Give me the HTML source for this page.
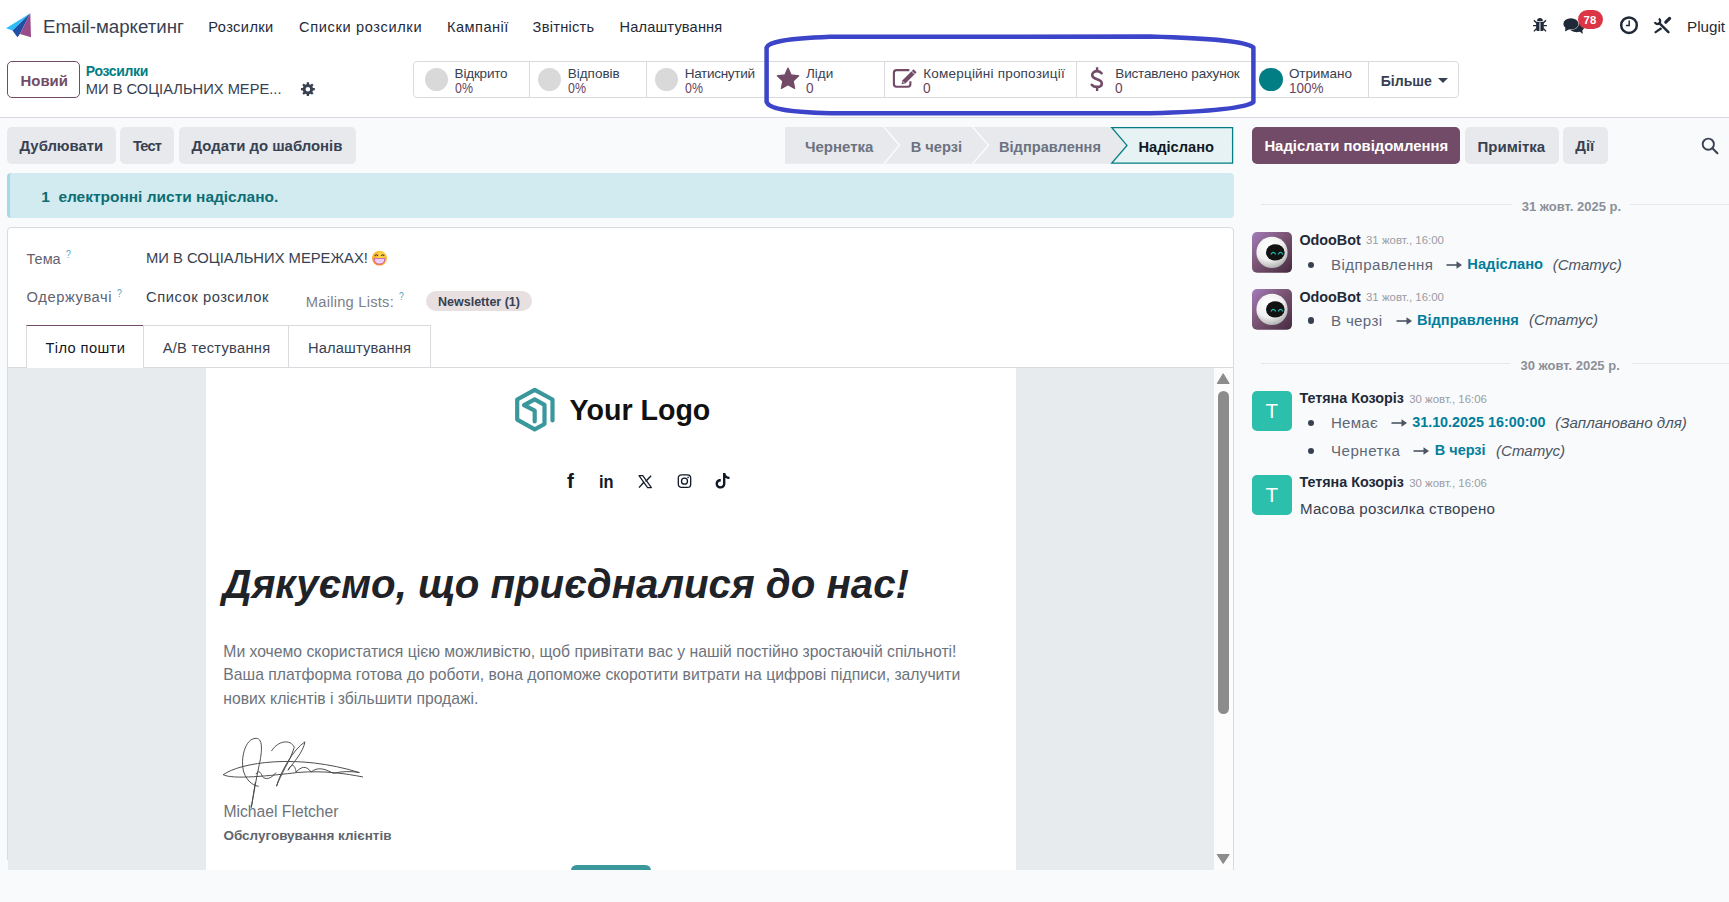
<!DOCTYPE html>
<html><head><meta charset="utf-8"><title>Email-маркетинг</title>
<style>
html,body{margin:0;padding:0;width:1729px;height:902px;overflow:hidden;background:#f9fafb;}
body{position:relative;font-family:"Liberation Sans",sans-serif;}
.a{position:absolute;}
.t{position:absolute;white-space:nowrap;}
</style></head><body>
<div class="a" style="left:0px;top:0px;width:1729px;height:117px;background:#fff"></div>
<div class="a" style="left:0px;top:117px;width:1729px;height:1px;background:#d8dadd"></div>
<div class="a" style="left:0px;top:118px;width:1729px;height:784px;background:#f9fafb"></div>
<svg class="a" style="left:6px;top:13px" width="26" height="25" viewBox="0 0 26 25">
<polygon points="0,15.3 24.3,0.3 6.5,17.6" fill="#2ebcfa"/>
<polygon points="6.5,17.6 24.3,0.3 13.9,21.1 11.4,24.2" fill="#1f4ea6"/>
<polygon points="24.3,0.3 25,24.2 13.9,21.1" fill="#984c8a"/>
</svg>
<div class="t " style="left:43.0px;top:18.07px;font-size:18.7px;line-height:18.7px;font-weight:400;color:#374151;">Email-маркетинг</div>
<div class="t " style="left:208.3px;top:19.74px;font-size:14.6px;line-height:14.6px;font-weight:400;color:#1f2937;letter-spacing:0.414px;">Розсилки</div>
<div class="t " style="left:299.0px;top:19.74px;font-size:14.6px;line-height:14.6px;font-weight:400;color:#1f2937;letter-spacing:0.641px;">Списки розсилки</div>
<div class="t " style="left:447.0px;top:19.74px;font-size:14.6px;line-height:14.6px;font-weight:400;color:#1f2937;letter-spacing:0.478px;">Кампанії</div>
<div class="t " style="left:532.6px;top:19.74px;font-size:14.6px;line-height:14.6px;font-weight:400;color:#1f2937;letter-spacing:0.262px;">Звітність</div>
<div class="t " style="left:619.5px;top:19.74px;font-size:14.6px;line-height:14.6px;font-weight:400;color:#1f2937;letter-spacing:0.172px;">Налаштування</div>
<div class="t " style="left:1687.0px;top:18.93px;font-size:15.2px;line-height:15.2px;font-weight:400;color:#1f2937;">Plugit</div>
<div class="a" style="left:7px;top:61px;width:73px;height:37px;border:1px solid #714b67;border-radius:5px;box-sizing:border-box;background:#fff"></div>
<div class="t " style="left:20.5px;top:74.14px;font-size:14.95px;line-height:14.95px;font-weight:700;color:#714b67;">Новий</div>
<div class="t " style="left:85.8px;top:63.95px;font-size:14.0px;line-height:14.0px;font-weight:700;color:#017e84;letter-spacing:-0.338px;">Розсилки</div>
<div class="t " style="left:85.8px;top:81.96px;font-size:14.7px;line-height:14.7px;font-weight:400;color:#374151;">МИ В СОЦІАЛЬНИХ МЕРЕ...</div>
<div class="a" style="left:412.5px;top:61px;width:1046.0px;height:36.5px;border:1px solid #d8dadd;border-radius:4px;box-sizing:border-box;background:#fff"></div>
<div class="a" style="left:529px;top:62px;width:1px;height:35px;background:#d8dadd"></div>
<div class="a" style="left:646px;top:62px;width:1px;height:35px;background:#d8dadd"></div>
<div class="a" style="left:766px;top:62px;width:1px;height:35px;background:#d8dadd"></div>
<div class="a" style="left:884px;top:62px;width:1px;height:35px;background:#d8dadd"></div>
<div class="a" style="left:1076px;top:62px;width:1px;height:35px;background:#d8dadd"></div>
<div class="a" style="left:1253px;top:62px;width:1px;height:35px;background:#d8dadd"></div>
<div class="a" style="left:1368px;top:62px;width:1px;height:35px;background:#d8dadd"></div>
<div class="a" style="left:424.5px;top:67.8px;width:23px;height:23px;border-radius:50%;background:#d9d9d9"></div>
<div class="a" style="left:537.9px;top:67.8px;width:23px;height:23px;border-radius:50%;background:#d9d9d9"></div>
<div class="a" style="left:655.0px;top:67.8px;width:23px;height:23px;border-radius:50%;background:#d9d9d9"></div>
<div class="a" style="left:1259.3px;top:67.8px;width:23.5px;height:23.5px;border-radius:50%;background:#017e84"></div>
<div class="t " style="left:454.6px;top:66.77px;font-size:13.5px;line-height:13.5px;font-weight:400;color:#374151;letter-spacing:-0.197px;">Відкрито</div>
<div class="t " style="left:454.6px;top:80.85px;font-size:14px;line-height:14px;font-weight:400;color:#6a4561;transform:scaleX(0.8846);transform-origin:0 0;">0%</div>
<div class="t " style="left:567.7px;top:66.77px;font-size:13.5px;line-height:13.5px;font-weight:400;color:#374151;">Відповів</div>
<div class="t " style="left:567.7px;top:80.85px;font-size:14px;line-height:14px;font-weight:400;color:#6a4561;transform:scaleX(0.8846);transform-origin:0 0;">0%</div>
<div class="t " style="left:684.7px;top:66.77px;font-size:13.5px;line-height:13.5px;font-weight:400;color:#374151;letter-spacing:-0.290px;">Натиснутий</div>
<div class="t " style="left:684.7px;top:80.85px;font-size:14px;line-height:14px;font-weight:400;color:#6a4561;transform:scaleX(0.8846);transform-origin:0 0;">0%</div>
<div class="t " style="left:805.9px;top:66.77px;font-size:13.5px;line-height:13.5px;font-weight:400;color:#374151;">Ліди</div>
<div class="t " style="left:805.9px;top:80.85px;font-size:14px;line-height:14px;font-weight:400;color:#6a4561;transform:scaleX(0.9761);transform-origin:0 0;">0</div>
<div class="t " style="left:923.3px;top:66.77px;font-size:13.5px;line-height:13.5px;font-weight:400;color:#374151;letter-spacing:0.202px;">Комерційні пропозиції</div>
<div class="t " style="left:923.3px;top:80.85px;font-size:14px;line-height:14px;font-weight:400;color:#6a4561;transform:scaleX(0.9761);transform-origin:0 0;">0</div>
<div class="t " style="left:1115.3px;top:66.77px;font-size:13.5px;line-height:13.5px;font-weight:400;color:#374151;letter-spacing:-0.164px;">Виставлено рахунок</div>
<div class="t " style="left:1115.3px;top:80.85px;font-size:14px;line-height:14px;font-weight:400;color:#6a4561;transform:scaleX(0.9761);transform-origin:0 0;">0</div>
<div class="t " style="left:1288.9px;top:66.77px;font-size:13.5px;line-height:13.5px;font-weight:400;color:#374151;letter-spacing:-0.070px;">Отримано</div>
<div class="t " style="left:1288.9px;top:80.85px;font-size:14px;line-height:14px;font-weight:400;color:#6a4561;transform:scaleX(0.9635);transform-origin:0 0;">100%</div>
<div class="t " style="left:1380.7px;top:73.98px;font-size:14.08px;line-height:14.08px;font-weight:700;color:#374151;">Більше</div>
<svg class="a" style="left:1437.5px;top:77.5px" width="10" height="5" viewBox="0 0 10 5"><polygon points="0,0 10,0 5,5" fill="#374151"/></svg>
<svg class="a" style="left:0;top:0" width="1729" height="120"><polygon points="788.00,68.00 791.17,74.93 798.75,75.81 793.14,80.97 794.64,88.44 788.00,84.70 781.36,88.44 782.86,80.97 777.25,75.81 784.83,74.93" fill="#714b67" stroke="#714b67" stroke-width="1.2" stroke-linejoin="round"/></svg>
<svg class="a" style="left:892px;top:68px" width="26" height="21" viewBox="0 0 26 21">
<path d="M17.3 2.1 H4.6 Q1.9 2.1 1.9 4.8 V16.1 Q1.9 18.8 4.6 18.8 H15.7 Q18.4 18.8 18.4 16.1 V13.2" fill="none" stroke="#714b67" stroke-width="2.1"/>
<path d="M21.5 1.2 L24.6 4.3 L13.6 15.3 L9.6 16.2 L10.5 12.2 Z" fill="#714b67"/>
<path d="M10.9 13.6 L12.2 14.9" stroke="#fff" stroke-width="1"/>
<path d="M19.6 3.1 L22.7 6.2" stroke="#fff" stroke-width="0.9"/>
</svg>
<svg class="a" style="left:1082px;top:62px" width="30" height="34" viewBox="0 0 30 34">
<path d="M15.1 5.2 V9 M15.1 24.8 V29.1" stroke="#714b67" stroke-width="2.4"/>
<path d="M19.6 11.2 C18.5 9.7 16.8 9.1 15.1 9.1 C12.3 9.1 10.2 10.7 10.2 13 C10.2 15.6 12.6 16.4 15.1 17.2 C17.6 18 19.8 18.9 19.8 21.4 C19.8 23.6 17.7 24.9 15.1 24.9 C12.8 24.9 10.9 24.1 9.8 22.8" fill="none" stroke="#714b67" stroke-width="2.6" stroke-linecap="round"/>
</svg>
<svg class="a" style="left:0;top:0" width="400" height="120"><path d="M312.95 87.95 L314.81 88.10 L314.81 90.30 L312.95 90.45 L312.35 91.88 L313.56 93.31 L312.01 94.86 L310.58 93.65 L309.15 94.25 L309.00 96.11 L306.80 96.11 L306.65 94.25 L305.22 93.65 L303.79 94.86 L302.24 93.31 L303.45 91.88 L302.85 90.45 L300.99 90.30 L300.99 88.10 L302.85 87.95 L303.45 86.52 L302.24 85.09 L303.79 83.54 L305.22 84.75 L306.65 84.15 L306.80 82.29 L309.00 82.29 L309.15 84.15 L310.58 84.75 L312.01 83.54 L313.56 85.09 L312.35 86.52 Z M310.2 89.2 A2.3 2.3 0 1 0 305.59999999999997 89.2 A2.3 2.3 0 1 0 310.2 89.2 Z" fill="#374151" fill-rule="evenodd"/></svg>
<svg class="a" style="left:0;top:0" width="1729" height="130"><path d="M766.6 102 L766.6 47.5 C769 41.5 785 39 830 36.8 L1150 36.6 C1215 38.5 1246 41.5 1253.4 47.5 L1253.4 102 C1246 108 1215 111.5 1150 113.3 L830 113.3 C785 112 769 108.5 766.6 102 Z" fill="none" stroke="#3c44c9" stroke-width="4.5" stroke-linejoin="round"/></svg>
<svg class="a" style="left:1530px;top:15px" width="20" height="20" viewBox="0 0 20 20">
<path d="M7.15 5.9 A2.8 2.8 0 0 1 12.75 5.9 Z" fill="#1f2937"/>
<path d="M6.1 6.8 H13.8 V14.6 Q13.8 16 12.4 16 H7.5 Q6.1 16 6.1 14.6 Z" fill="#1f2937"/>
<rect x="9.45" y="7.4" width="1" height="8.6" fill="#fff"/>
<path d="M3.9 5.2 L6.6 7.9 M16 5.2 L13.3 7.9 M3 10.6 H6.2 M16.9 10.6 H13.7 M6.4 13.6 L3.9 16.4 M13.5 13.6 L16 16.4" stroke="#1f2937" stroke-width="1.4"/>
</svg>
<svg class="a" style="left:1562px;top:15px" width="24" height="22" viewBox="0 0 24 22">
<ellipse cx="14.6" cy="12.6" rx="7.4" ry="4.6" fill="#1f2937"/>
<path d="M16.5 15.5 L20.8 19.1 L20.2 14.6 Z" fill="#1f2937"/>
<ellipse cx="8.9" cy="8.9" rx="7.9" ry="6.0" fill="#fff"/>
<ellipse cx="8.9" cy="8.9" rx="7.5" ry="5.7" fill="#1f2937"/>
<path d="M3.4 12.4 L3.1 16.5 L7.2 14.2 Z" fill="#1f2937"/>
</svg>
<div class="a" style="left:1578px;top:10px;width:24.5px;height:19.4px;border-radius:10px;background:#dc3545"></div>
<div class="t " style="left:1583.6px;top:14.73px;font-size:11.3px;line-height:11.3px;font-weight:700;color:#fff;">78</div>
<svg class="a" style="left:1619px;top:15px" width="20" height="20" viewBox="0 0 20 20">
<circle cx="10" cy="10.2" r="7.8" fill="none" stroke="#1f2937" stroke-width="2.5"/>
<path d="M10.2 5.6 V10.4 H6.9" fill="none" stroke="#1f2937" stroke-width="1.5"/>
</svg>
<svg class="a" style="left:1652px;top:16px" width="20" height="19" viewBox="0 0 20 19">
<path d="M7.6 7.4 L16.4 16.2" stroke="#1f2937" stroke-width="2.5" stroke-linecap="round"/>
<path d="M6.8 2.78 A2.8 2.8 0 1 1 2.77 6.16" fill="none" stroke="#1f2937" stroke-width="2.3"/>
<path d="M17.6 2.4 L13.8 6.2" stroke="#1f2937" stroke-width="3.2" stroke-linecap="round"/>
<path d="M8.6 11.3 L10.3 13 L3.4 17.4 L2.1 16.1 Z" fill="#1f2937"/>
</svg>
<div class="a" style="left:7px;top:127px;width:108.7px;height:36.69999999999999px;background:#e7e9ed;border-radius:5px"></div>
<div class="t " style="left:19.6px;top:139.22px;font-size:14.86px;line-height:14.86px;font-weight:700;color:#374151;">Дублювати</div>
<div class="a" style="left:120.2px;top:127px;width:53.60000000000001px;height:36.69999999999999px;background:#e7e9ed;border-radius:5px"></div>
<div class="t " style="left:132.9px;top:139.44px;font-size:14.6px;line-height:14.6px;font-weight:700;color:#374151;letter-spacing:-0.797px;">Тест</div>
<div class="a" style="left:179.1px;top:127px;width:177.4px;height:36.69999999999999px;background:#e7e9ed;border-radius:5px"></div>
<div class="t " style="left:191.5px;top:139.19px;font-size:14.9px;line-height:14.9px;font-weight:700;color:#374151;">Додати до шаблонів</div>
<svg class="a" style="left:0;top:0" width="1240" height="170">
<polygon points="785,127 1119,127 1134.5,145.3 1119,163.7 785,163.7" fill="#e7e9ed"/>
<polyline points="884,127 899.4,145.3 884,163.7" fill="none" stroke="#f9fafb" stroke-width="1.6"/>
<polyline points="972.6,127 988.5,145.3 972.6,163.7" fill="none" stroke="#f9fafb" stroke-width="1.6"/>
<polygon points="1111.8,127.6 1232.6,127.6 1232.6,163.2 1111.8,163.2 1127,145.4" fill="#e6f2f3" stroke="#017e84" stroke-width="1.3"/>
</svg>
<div class="t " style="left:805.0px;top:139.31px;font-size:14.99px;line-height:14.99px;font-weight:700;color:#6b7280;">Чернетка</div>
<div class="t " style="left:910.7px;top:139.62px;font-size:14.62px;line-height:14.62px;font-weight:700;color:#6b7280;">В черзі</div>
<div class="t " style="left:999.0px;top:139.62px;font-size:14.62px;line-height:14.62px;font-weight:700;color:#6b7280;">Відправлення</div>
<div class="t " style="left:1138.5px;top:139.60px;font-size:14.65px;line-height:14.65px;font-weight:700;color:#111827;">Надіслано</div>
<div class="a" style="left:7px;top:173px;width:1226.5px;height:44.599999999999994px;background:#d2ebf0;border-radius:4px;border-left:3px solid #a3d9e3;box-sizing:border-box"></div>
<div class="t " style="left:41.2px;top:188.50px;font-size:15.47px;line-height:15.47px;font-weight:700;color:#0c6e74;white-space:pre">1&nbsp; електронні листи надіслано.</div>
<div class="a" style="left:7px;top:227px;width:1227px;height:653px;background:#fff;border:1px solid #d8dadd;border-radius:4px;box-sizing:border-box"></div>
<div class="t " style="left:26.6px;top:251.68px;font-size:14.44px;line-height:14.44px;font-weight:400;color:#5f636f;">Тема</div>
<div class="t " style="left:66.2px;top:249.27px;font-size:11.5px;line-height:11.5px;font-weight:400;color:#4aa3b8;transform:scaleX(0.75);transform-origin:0 0;">?</div>
<div class="t " style="left:26.6px;top:289.66px;font-size:14.7px;line-height:14.7px;font-weight:400;color:#5f636f;letter-spacing:0.576px;">Одержувачі</div>
<div class="t " style="left:117.2px;top:287.67px;font-size:11.5px;line-height:11.5px;font-weight:400;color:#4aa3b8;transform:scaleX(0.75);transform-origin:0 0;">?</div>
<div class="t " style="left:146.0px;top:251.30px;font-size:14.77px;line-height:14.77px;font-weight:400;color:#374151;">МИ В СОЦІАЛЬНИХ МЕРЕЖАХ!</div>
<div class="t " style="left:146.0px;top:289.66px;font-size:14.7px;line-height:14.7px;font-weight:400;color:#374151;letter-spacing:0.567px;">Список розсилок</div>
<div class="t " style="left:305.8px;top:294.76px;font-size:14.7px;line-height:14.7px;font-weight:400;color:#7c7f89;letter-spacing:0.233px;">Mailing Lists:</div>
<div class="t " style="left:398.8px;top:291.47px;font-size:11.5px;line-height:11.5px;font-weight:400;color:#4aa3b8;transform:scaleX(0.75);transform-origin:0 0;">?</div>
<div class="a" style="left:426px;top:291px;width:105.79999999999995px;height:19.80000000000001px;background:#e8dfe1;border-radius:10px"></div>
<div class="t " style="left:438.0px;top:296.41px;font-size:12.51px;line-height:12.51px;font-weight:700;color:#374151;">Newsletter (1)</div>
<svg class="a" style="left:372px;top:251px" width="16" height="15" viewBox="0 0 16 15">
<defs><radialGradient id="eg" cx="0.6" cy="0.3" r="0.8"><stop offset="0" stop-color="#ffe04a"/><stop offset="0.7" stop-color="#f9a825"/><stop offset="1" stop-color="#f0813a"/></radialGradient></defs>
<circle cx="7.5" cy="7.2" r="7.4" fill="url(#eg)"/>
<path d="M3 5 Q4.5 2.4 6 5 M9.2 5 Q10.7 2.4 12.2 5" fill="none" stroke="#4a2d2d" stroke-width="1.1"/>
<path d="M2.2 7.6 H12.9 Q12.6 13 7.5 13 Q2.5 13 2.2 7.6 Z" fill="#f3dcf5" stroke="#b23fc0" stroke-width="0.7"/>
<path d="M3 10 H12" stroke="#e3b6ea" stroke-width="0.7"/>
</svg>
<div class="a" style="left:8px;top:367px;width:1225px;height:1px;background:#d8dadd"></div>
<div class="a" style="left:26px;top:324.5px;width:117.5px;height:43.5px;background:#fff;border:1px solid #d8dadd;border-bottom:none;border-top:1.5px solid #714b67;box-sizing:border-box"></div>
<div class="a" style="left:143px;top:324.5px;width:146px;height:42.5px;border:1px solid #d8dadd;border-bottom:none;border-left:none;box-sizing:border-box"></div>
<div class="a" style="left:288px;top:324.5px;width:143px;height:42.5px;border:1px solid #d8dadd;border-bottom:none;border-left:none;box-sizing:border-box"></div>
<div class="a" style="left:27px;top:366px;width:115.5px;height:2px;background:#fff"></div>
<div class="t " style="left:45.5px;top:341.06px;font-size:14.7px;line-height:14.7px;font-weight:400;color:#111827;letter-spacing:0.375px;">Тіло пошти</div>
<div class="t " style="left:162.7px;top:341.06px;font-size:14.7px;line-height:14.7px;font-weight:400;color:#374151;letter-spacing:0.259px;">A/B тестування</div>
<div class="t " style="left:308.0px;top:341.06px;font-size:14.7px;line-height:14.7px;font-weight:400;color:#374151;letter-spacing:0.127px;">Налаштування</div>
<div class="a" style="left:8px;top:368px;width:1206px;height:502px;background:#e7ebee"></div>
<div class="a" style="left:206px;top:368px;width:810px;height:502px;background:#fff"></div>
<div class="a" style="left:1214px;top:368px;width:19px;height:502px;background:#fcfcfc"></div>
<div class="a" style="left:1218.2px;top:391px;width:10.799999999999955px;height:322.5px;background:#8c8c8c;border-radius:6px"></div>
<svg class="a" style="left:1216px;top:372px" width="15" height="495" viewBox="0 0 15 495">
<polygon points="1.2,11.5 7.2,1.7 13.2,11.5" fill="#8c8c8c" stroke="#8c8c8c" stroke-width="1" stroke-linejoin="round"/>
<polygon points="1.2,482.5 13.2,482.5 7.2,491.5" fill="#8c8c8c" stroke="#8c8c8c" stroke-width="1" stroke-linejoin="round"/>
</svg>
<div class="a" style="left:0px;top:870px;width:1240px;height:32px;background:#f9fafb"></div>
<svg class="a" style="left:510px;top:383px" width="50" height="54" viewBox="0 0 50 54">
<polyline points="42.5,37.4 42.5,16.5 24.7,6.8 7.2,16.5 7.2,36.6 24.7,46.3 34.5,41 34.5,21.8 24.7,16.4 14,22.2 24.7,27.6 24.7,38.4" fill="none" stroke="#3a979b" stroke-width="4.2" stroke-linecap="round" stroke-linejoin="round"/>
</svg>
<div class="t " style="left:569.5px;top:396.29px;font-size:28.6px;line-height:28.6px;font-weight:700;color:#111111;">Your Logo</div>
<div class="t " style="left:567.0px;top:470.65px;font-size:20.5px;line-height:20.5px;font-weight:700;color:#111827;">f</div>
<div class="t " style="left:598.6px;top:473.39px;font-size:18.2px;line-height:18.2px;font-weight:700;color:#111827;transform:scaleX(0.9027);transform-origin:0 0;">in</div>
<svg class="a" style="left:636px;top:473px" width="18" height="17" viewBox="0 0 18 17">
<path d="M3 2.7 H6.8 L15.4 14.6 H11.6 Z" fill="none" stroke="#111827" stroke-width="1.2" stroke-linejoin="round"/>
<path d="M15.1 2.7 L9.6 8.5 M3 14.6 L8.1 9" stroke="#111827" stroke-width="1.4"/>
</svg>
<svg class="a" style="left:676px;top:473px" width="17" height="16" viewBox="0 0 17 16">
<rect x="2.3" y="1.8" width="12.4" height="12.6" rx="3.2" fill="none" stroke="#111827" stroke-width="1.3"/>
<circle cx="8.5" cy="8.2" r="3" fill="none" stroke="#111827" stroke-width="1.3"/>
<circle cx="12.1" cy="4.4" r="0.8" fill="#111827"/>
</svg>
<svg class="a" style="left:714px;top:471px" width="17" height="19" viewBox="0 0 17 19">
<path d="M9 2 H11.3 C11.6 4.2 13 5.6 15.5 5.7 V8.1 C13.9 8.1 12.5 7.6 11.4 6.8 V12.5 C11.4 15.4 9.4 17.6 6.4 17.6 C3.6 17.6 1.6 15.5 1.6 12.8 C1.6 10 3.8 7.9 6.8 8.1 V10.5 C5.2 10.2 3.9 11.2 3.9 12.8 C3.9 14.2 5 15.3 6.4 15.3 C7.9 15.3 9 14.2 9 12.5 Z" fill="#111827"/>
</svg>
<div class="t " style="left:222.6px;top:564.53px;font-size:40.25px;line-height:40.25px;font-weight:700;font-style:italic;color:#1f2328;">Дякуємо, що приєдналися до нас!</div>
<div class="t " style="left:223.3px;top:643.59px;font-size:15.72px;line-height:15.72px;font-weight:400;color:#6c737c;">Ми хочемо скористатися цією можливістю, щоб привітати вас у нашій постійно зростаючій спільноті!</div>
<div class="t " style="left:223.3px;top:666.59px;font-size:15.72px;line-height:15.72px;font-weight:400;color:#6c737c;">Ваша платформа готова до роботи, вона допоможе скоротити витрати на цифрові підписи, залучити</div>
<div class="t " style="left:223.3px;top:690.69px;font-size:15.72px;line-height:15.72px;font-weight:400;color:#6c737c;">нових клієнтів і збільшити продажі.</div>
<svg class="a" style="left:218px;top:733px" width="150" height="80" viewBox="0 0 1691 902">
<g fill="none" stroke="#4a4a4a" stroke-width="11" stroke-linecap="round">
<path d="M60 470 C 250 330, 900 230, 1590 445"/>
<path d="M60 470 C 150 530, 600 480, 900 445 C 1200 420, 1450 460, 1630 495"/>
<path d="M455 600 C 420 600, 330 560, 290 440 C 250 300, 300 60, 430 60 C 520 60, 490 250, 460 380 C 430 520, 400 700, 375 840 C 390 760, 405 650, 420 560"/>
<path d="M430 460 C 450 420, 480 430, 500 490 C 530 530, 600 520, 650 450"/>
<path d="M605 200 C 680 80, 820 70, 860 160 C 820 300, 700 480, 660 600 C 700 450, 850 180, 980 100 C 960 220, 850 330, 790 420 C 830 330, 870 360, 880 440 C 940 380, 990 360, 1050 440 C 1120 380, 1200 400, 1300 455 C 1400 430, 1500 430, 1590 445"/>
</g></svg>
<div class="t " style="left:223.5px;top:804.03px;font-size:15.68px;line-height:15.68px;font-weight:400;color:#6c737c;">Michael Fletcher</div>
<div class="t " style="left:223.5px;top:828.90px;font-size:13.47px;line-height:13.47px;font-weight:700;color:#5f656d;">Обслуговування клієнтів</div>
<div class="a" style="left:570.5px;top:865px;width:80.5px;height:11px;background:#3a979b;border-radius:6px"></div>
<div class="a" style="left:0px;top:870px;width:1240px;height:32px;background:#f9fafb"></div>
<div class="a" style="left:6px;top:860px;width:2px;height:10px;background:#f9fafb"></div>
<div class="a" style="left:1252px;top:127px;width:208px;height:36.69999999999999px;background:#714b67;border-radius:5px"></div>
<div class="t " style="left:1264.4px;top:139.21px;font-size:14.87px;line-height:14.87px;font-weight:700;color:#ffffff;">Надіслати повідомлення</div>
<div class="a" style="left:1465px;top:127px;width:93.70000000000005px;height:36.69999999999999px;background:#e7e9ed;border-radius:5px"></div>
<div class="t " style="left:1477.5px;top:139.10px;font-size:15.0px;line-height:15.0px;font-weight:700;color:#374151;">Примітка</div>
<div class="a" style="left:1563px;top:127px;width:44.799999999999955px;height:36.69999999999999px;background:#e7e9ed;border-radius:5px"></div>
<div class="t " style="left:1575.3px;top:139.15px;font-size:14.94px;line-height:14.94px;font-weight:700;color:#374151;">Дії</div>
<svg class="a" style="left:1700px;top:136px" width="20" height="20" viewBox="0 0 20 20">
<circle cx="8.3" cy="8.2" r="5.6" fill="none" stroke="#374151" stroke-width="1.9"/>
<path d="M12.4 12.3 L17.4 17.2" stroke="#374151" stroke-width="2.1" stroke-linecap="round"/>
</svg>
<div class="a" style="left:1261px;top:204px;width:250.70000000000005px;height:1px;background:#e5e7eb"></div>
<div class="a" style="left:1630px;top:204px;width:99px;height:1px;background:#e5e7eb"></div>
<div class="t " style="left:1521.8px;top:199.60px;font-size:13.0px;line-height:13.0px;font-weight:700;color:#8b9099;">31 жовт. 2025 р.</div>
<div class="a" style="left:1261px;top:363px;width:249px;height:1px;background:#e5e7eb"></div>
<div class="a" style="left:1631.7px;top:363px;width:97.29999999999995px;height:1px;background:#e5e7eb"></div>
<div class="t " style="left:1520.5px;top:358.60px;font-size:13.0px;line-height:13.0px;font-weight:700;color:#8b9099;">30 жовт. 2025 р.</div>
<svg class="a" style="left:1252px;top:232px" width="40" height="41" viewBox="0 0 40 41">
<defs><linearGradient id="bg232" x1="0" y1="0" x2="1" y2="1"><stop offset="0" stop-color="#a47cbd"/><stop offset="0.45" stop-color="#7a5574"/><stop offset="1" stop-color="#452a40"/></linearGradient>
<radialGradient id="sg232" cx="0.4" cy="0.3" r="0.75"><stop offset="0" stop-color="#ffffff"/><stop offset="0.6" stop-color="#f0f0f0"/><stop offset="1" stop-color="#a9a9a9"/></radialGradient></defs>
<rect x="0" y="0" width="40" height="40.8" rx="5" fill="url(#bg232)"/>
<circle cx="20" cy="20.4" r="15.6" fill="url(#sg232)"/>
<ellipse cx="23.3" cy="20.4" rx="9.3" ry="8.2" fill="#121212"/>
<path d="M19.2 22 Q21.3 18.6 23.4 22 M26.4 22 Q28.5 18.6 30.6 22" fill="none" stroke="#1dbcb0" stroke-width="1.3" stroke-linecap="round"/>
</svg>
<div class="t " style="left:1299.4px;top:232.74px;font-size:14.36px;line-height:14.36px;font-weight:700;color:#1f2937;">OdooBot</div>
<div class="t " style="left:1366.0px;top:234.70px;font-size:11.46px;line-height:11.46px;font-weight:400;color:#9a9ca5;">31 жовт., 16:00</div>
<div class="a" style="left:1308px;top:261.9px;width:6.2px;height:6.2px;border-radius:50%;background:#374151"></div>
<div class="t " style="left:1331.0px;top:257.42px;font-size:15.1px;line-height:15.1px;font-weight:400;color:#5f6877;letter-spacing:0.459px;">Відправлення</div>
<svg class="a" style="left:1446px;top:260px" width="17" height="10" viewBox="0 0 17 10"><path d="M0.5 5 H13" stroke="#4b5563" stroke-width="1.6"/><polygon points="10.5,1.3 16,5 10.5,8.7" fill="#4b5563"/></svg>
<div class="t " style="left:1467.3px;top:257.26px;font-size:14.69px;line-height:14.69px;font-weight:700;color:#017e9c;">Надіслано</div>
<div class="t " style="left:1552.7px;top:256.93px;font-size:15.08px;line-height:15.08px;font-weight:400;font-style:italic;color:#4b5563;">(Статус)</div>
<svg class="a" style="left:1252px;top:289px" width="40" height="41" viewBox="0 0 40 41">
<defs><linearGradient id="bg289" x1="0" y1="0" x2="1" y2="1"><stop offset="0" stop-color="#a47cbd"/><stop offset="0.45" stop-color="#7a5574"/><stop offset="1" stop-color="#452a40"/></linearGradient>
<radialGradient id="sg289" cx="0.4" cy="0.3" r="0.75"><stop offset="0" stop-color="#ffffff"/><stop offset="0.6" stop-color="#f0f0f0"/><stop offset="1" stop-color="#a9a9a9"/></radialGradient></defs>
<rect x="0" y="0" width="40" height="40.8" rx="5" fill="url(#bg289)"/>
<circle cx="20" cy="20.4" r="15.6" fill="url(#sg289)"/>
<ellipse cx="23.3" cy="20.4" rx="9.3" ry="8.2" fill="#121212"/>
<path d="M19.2 22 Q21.3 18.6 23.4 22 M26.4 22 Q28.5 18.6 30.6 22" fill="none" stroke="#1dbcb0" stroke-width="1.3" stroke-linecap="round"/>
</svg>
<div class="t " style="left:1299.4px;top:290.44px;font-size:14.36px;line-height:14.36px;font-weight:700;color:#1f2937;">OdooBot</div>
<div class="t " style="left:1366.0px;top:292.40px;font-size:11.46px;line-height:11.46px;font-weight:400;color:#9a9ca5;">31 жовт., 16:00</div>
<div class="a" style="left:1308px;top:317.4px;width:6.2px;height:6.2px;border-radius:50%;background:#374151"></div>
<div class="t " style="left:1331.0px;top:312.72px;font-size:15.1px;line-height:15.1px;font-weight:400;color:#5f6877;letter-spacing:0.327px;">В черзі</div>
<svg class="a" style="left:1396px;top:315.5px" width="17" height="10" viewBox="0 0 17 10"><path d="M0.5 5 H13" stroke="#4b5563" stroke-width="1.6"/><polygon points="10.5,1.3 16,5 10.5,8.7" fill="#4b5563"/></svg>
<div class="t " style="left:1417.0px;top:312.64px;font-size:14.6px;line-height:14.6px;font-weight:700;color:#017e9c;">Відправлення</div>
<div class="t " style="left:1529.0px;top:312.23px;font-size:15.08px;line-height:15.08px;font-weight:400;font-style:italic;color:#4b5563;">(Статус)</div>
<div class="a" style="left:1252px;top:391px;width:40px;height:40px;background:#2bbfac;border-radius:5px"></div>
<div class="t " style="left:1265.5px;top:401.26px;font-size:20.6px;line-height:20.6px;font-weight:400;color:#ffffff;">T</div>
<div class="t " style="left:1299.4px;top:391.15px;font-size:14.35px;line-height:14.35px;font-weight:700;color:#1f2937;">Тетяна Козоріз</div>
<div class="t " style="left:1409.2px;top:393.92px;font-size:11.43px;line-height:11.43px;font-weight:400;color:#9a9ca5;">30 жовт., 16:06</div>
<div class="a" style="left:1308px;top:419.9px;width:6.2px;height:6.2px;border-radius:50%;background:#374151"></div>
<div class="t " style="left:1331.0px;top:415.12px;font-size:15.1px;line-height:15.1px;font-weight:400;color:#5f6877;letter-spacing:0.203px;">Немає</div>
<svg class="a" style="left:1391px;top:418px" width="17" height="10" viewBox="0 0 17 10"><path d="M0.5 5 H13" stroke="#4b5563" stroke-width="1.6"/><polygon points="10.5,1.3 16,5 10.5,8.7" fill="#4b5563"/></svg>
<div class="t " style="left:1412.2px;top:415.25px;font-size:14.35px;line-height:14.35px;font-weight:700;color:#017e9c;">31.10.2025 16:00:00</div>
<div class="t " style="left:1555.3px;top:414.59px;font-size:15.13px;line-height:15.13px;font-weight:400;font-style:italic;color:#4b5563;">(Заплановано для)</div>
<div class="a" style="left:1308px;top:447.9px;width:6.2px;height:6.2px;border-radius:50%;background:#374151"></div>
<div class="t " style="left:1331.0px;top:443.22px;font-size:15.1px;line-height:15.1px;font-weight:400;color:#5f6877;letter-spacing:0.507px;">Чернетка</div>
<svg class="a" style="left:1413px;top:446px" width="17" height="10" viewBox="0 0 17 10"><path d="M0.5 5 H13" stroke="#4b5563" stroke-width="1.6"/><polygon points="10.5,1.3 16,5 10.5,8.7" fill="#4b5563"/></svg>
<div class="t " style="left:1434.8px;top:443.24px;font-size:14.48px;line-height:14.48px;font-weight:700;color:#017e9c;">В черзі</div>
<div class="t " style="left:1496.0px;top:442.73px;font-size:15.08px;line-height:15.08px;font-weight:400;font-style:italic;color:#4b5563;">(Статус)</div>
<div class="a" style="left:1252px;top:475px;width:40px;height:40px;background:#2bbfac;border-radius:5px"></div>
<div class="t " style="left:1265.5px;top:485.26px;font-size:20.6px;line-height:20.6px;font-weight:400;color:#ffffff;">T</div>
<div class="t " style="left:1299.4px;top:475.45px;font-size:14.35px;line-height:14.35px;font-weight:700;color:#1f2937;">Тетяна Козоріз</div>
<div class="t " style="left:1409.2px;top:478.22px;font-size:11.43px;line-height:11.43px;font-weight:400;color:#9a9ca5;">30 жовт., 16:06</div>
<div class="t " style="left:1300.0px;top:500.62px;font-size:15.1px;line-height:15.1px;font-weight:400;color:#374151;letter-spacing:0.232px;">Масова розсилка створено</div>
</body></html>
